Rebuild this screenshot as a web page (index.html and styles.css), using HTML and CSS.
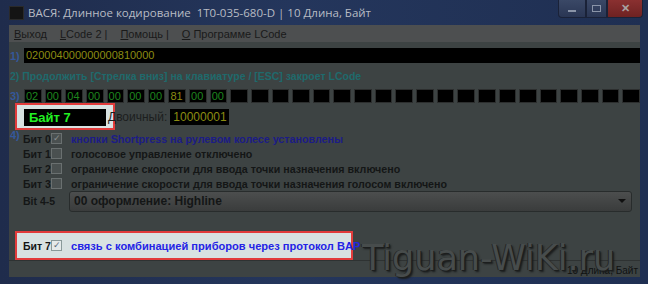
FILE: index.html
```html
<!DOCTYPE html>
<html lang="ru">
<head>
    <meta charset="UTF-8">
    <title>ВАСЯ: Длинное кодирование</title>
    <link rel="stylesheet" href="styles.css">
</head>
<body>
    <div class="window">
        <!-- Title bar -->
        <div class="titlebar">
            <div class="app-icon"></div>
            <div class="title">ВАСЯ: Длинное кодирование&nbsp; 1T0-035-680-D | 10 Длина, Байт</div>
            <div class="controls">
                <div class="ctl ctl-min"><span></span></div>
                <div class="ctl ctl-max"><span></span></div>
                <div class="ctl ctl-close">✕</div>
            </div>
        </div>

        <div class="client">
            <div class="menubar">
                <span class="menu-item"><u>В</u>ыход</span>
                <span class="menu-item"><u>L</u>Code 2 |</span>
                <span class="menu-item"><u>П</u>омощь |</span>
                <span class="menu-item"><u>О</u> Программе LCode</span>
            </div>

            <div class="content">
                <div class="row row-code">
                    <span class="num">1)</span>
                    <div class="code-field">020004000000000810000</div>
                </div>

                <div class="row row-hint">2) Продолжить [Стрелка вниз] на клавиатуре / [ESC] закроет LCode</div>

                <div class="row row-bytes">
                    <span class="num">3)</span>
                    <div class="bytes">
                        <div class="byte">02</div>
                        <div class="byte">00</div>
                        <div class="byte">04</div>
                        <div class="byte">00</div>
                        <div class="byte">00</div>
                        <div class="byte">00</div>
                        <div class="byte">00</div>
                        <div class="byte byte-sel">81</div>
                        <div class="byte">00</div>
                        <div class="byte">00</div>
                        <div class="byte"></div><div class="byte"></div><div class="byte"></div><div class="byte"></div><div class="byte"></div>
                        <div class="byte"></div><div class="byte"></div><div class="byte"></div><div class="byte"></div><div class="byte"></div>
                        <div class="byte"></div><div class="byte"></div><div class="byte"></div><div class="byte"></div><div class="byte"></div>
                        <div class="byte"></div><div class="byte"></div><div class="byte"></div><div class="byte"></div><div class="byte"></div>
                    </div>
                </div>

                <div class="row row-byte-info">
                    <div class="highlight hl-byte">
                        <div class="byte-name">Байт 7</div>
                    </div>
                    <span class="bin-label">Двоичный:</span>
                    <div class="bin-field">10000001</div>
                </div>

                <div class="bits">
                    <span class="num num-4">4)</span>
                    <div class="bit">
                        <span class="bit-label">Бит 0</span>
                        <span class="check checked">✓</span>
                        <span class="bit-text bit-on">кнопки Shortpress на рулевом колесе установлены</span>
                    </div>
                    <div class="bit">
                        <span class="bit-label">Бит 1</span>
                        <span class="check"></span>
                        <span class="bit-text">голосовое управление отключено</span>
                    </div>
                    <div class="bit">
                        <span class="bit-label">Бит 2</span>
                        <span class="check"></span>
                        <span class="bit-text">ограничение скорости для ввода точки назначения включено</span>
                    </div>
                    <div class="bit">
                        <span class="bit-label">Бит 3</span>
                        <span class="check"></span>
                        <span class="bit-text">ограничение скорости для ввода точки назначения голосом включено</span>
                    </div>
                    <div class="bit bit-combo">
                        <span class="bit-label">Bit 4-5</span>
                        <div class="combo">
                            <span>00 оформление: Highline</span>
                            <span class="combo-arrow"></span>
                        </div>
                    </div>
                </div>

                <div class="highlight hl-bit7">
                    <span class="bit-label">Бит 7</span>
                    <span class="check checked">✓</span>
                    <span class="bit7-text">связь с комбинацией приборов через протокол BAP</span>
                </div>
            </div>

            <div class="statusbar">10 Длина, Байт</div>
        </div>

        <div class="watermark">Tiguan-WiKi.ru</div>
    </div>
</body>
</html>
```

FILE: styles.css
```css
body {
    margin: 0;
    width: 648px;
    height: 284px;
    overflow: hidden;
    background-color: #1c2946;
    font-family: 'Liberation Sans', Arial, sans-serif;
}
.window {
    position: relative;
    height: 284px;
    display: flex;
    flex-direction: column;
    background: linear-gradient(90deg, #1f2c4c 0%, #24365c 45%, #1f2f52 100%);
}
.titlebar {
    height: 25px;
    flex-shrink: 0;
    display: flex;
    align-items: center;
    padding-left: 9px;
}
.app-icon {
    width: 13px;
    height: 12px;
    background-color: #141414;
    border: 1px solid #2a2a2a;
    margin-right: 4px;
}
.title {
    color: #b8bcc4;
    font-family: 'Open Sans', 'Liberation Sans', sans-serif;
    font-size: 11.5px;
    flex: 1;
    white-space: nowrap;
}
.controls {
    align-self: flex-start;
    display: flex;
    margin-right: 5px;
}
.ctl {
    height: 17px;
    border: 1px solid #1a2238;
    border-top: none;
    display: flex;
    align-items: center;
    justify-content: center;
    background: linear-gradient(#3a4866, #2a3654);
}
.ctl-min {
    width: 26px;
    border-radius: 0 0 0 4px;
}
.ctl-min span {
    width: 8px;
    height: 2px;
    background-color: #8a94a8;
    margin-top: 4px;
}
.ctl-max {
    width: 19px;
}
.ctl-max span {
    width: 7px;
    height: 5px;
    border: 1px solid #8a94a8;
}
.ctl-close {
    width: 34px;
    border-radius: 0 0 4px 0;
    background: linear-gradient(#8a3030, #6e2222);
    color: #a8a0a0;
    font-size: 11px;
    font-weight: bold;
}
.client {
    flex: 1;
    margin: 0 8px 7px 9px;
    background-color: #3d4343;
    display: flex;
    flex-direction: column;
    min-height: 0;
}
.menubar {
    height: 17px;
    flex-shrink: 0;
    background-color: #4d4f50;
    display: flex;
    align-items: center;
    font-size: 11px;
    color: #1a1a1a;
    padding-left: 5px;
    gap: 13px;
}
.menubar u {
    text-underline-offset: 1px;
}
.content {
    flex: 1;
    display: flex;
    flex-direction: column;
    padding: 6px 0 0 1px;
}
.row {
    display: flex;
    align-items: center;
}
.num {
    color: #34589a;
    font-size: 11px;
    font-weight: bold;
    width: 14px;
    flex-shrink: 0;
}
.code-field {
    flex: 1;
    height: 15px;
    background-color: #000;
    color: #8c8c12;
    font-size: 11px;
    line-height: 15px;
    padding-left: 2px;
}
.row-hint {
    margin-top: 6px;
    height: 13px;
    color: #1f6a6c;
    font-size: 10.5px;
    font-weight: bold;
}
.row-bytes {
    margin-top: 7px;
}
.bytes {
    flex: 1;
    display: grid;
    grid-template-columns: repeat(30, 1fr);
    gap: 3px;
}
.byte {
    height: 14px;
    background-color: #000;
    border: 1px solid #2c2e2e;
    box-sizing: border-box;
    color: #1e861e;
    font-size: 11px;
    line-height: 13px;
    padding-left: 1px;
}
.byte-sel {
    color: #8c8c12;
}
.row-byte-info {
    padding-left: 5px;
}
.highlight {
    background-color: #d8e2e2;
    border: 2px solid #e23c3c;
    box-sizing: border-box;
}
.hl-byte {
    width: 100px;
    height: 27px;
    padding: 4px 7px 0 7px;
}
.byte-name {
    height: 17px;
    background-color: #000;
    color: #22f022;
    font-size: 13px;
    font-weight: bold;
    line-height: 17px;
    padding-left: 5px;
}
.bin-label {
    position: relative;
    margin-left: -7px;
    color: #1c1e1e;
    font-size: 12px;
}
.bin-field {
    margin-left: 3px;
    width: 59px;
    height: 16px;
    background-color: #000;
    color: #8c8c12;
    font-size: 12px;
    line-height: 16px;
    padding-left: 3px;
    box-sizing: border-box;
}
.bits {
    position: relative;
    display: flex;
    flex-direction: column;
    padding-left: 13px;
    margin-top: 1px;
}
.num-4 {
    position: absolute;
    left: 0;
    top: -2px;
}
.bit {
    display: flex;
    align-items: center;
    height: 15px;
}
.bit-label {
    width: 28px;
    flex-shrink: 0;
    color: #141616;
    font-size: 10.5px;
    font-weight: bold;
    white-space: nowrap;
}
.check {
    width: 11px;
    height: 11px;
    flex-shrink: 0;
    box-sizing: border-box;
    border: 1px solid #6a7070;
    background-color: #4a5050;
    margin-right: 9px;
    color: #8a9090;
    font-size: 9px;
    line-height: 9px;
    text-align: center;
}
.bit-text {
    color: #141616;
    font-size: 10.7px;
    font-weight: bold;
    white-space: nowrap;
}
.bit-on {
    color: #1c1c86;
}
.bit-combo {
    height: 22px;
    margin-top: -1px;
}
.bit-combo .bit-label {
    width: 46px;
}
.combo {
    width: 563px;
    height: 21px;
    box-sizing: border-box;
    border: 1px solid #282c2c;
    border-radius: 3px;
    background: linear-gradient(#4c4e4e, #3a3c3c);
    display: flex;
    align-items: center;
    justify-content: space-between;
    padding: 0 5px 0 4px;
    color: #141616;
    font-size: 12px;
    font-weight: bold;
}
.combo-arrow {
    width: 0;
    height: 0;
    border-left: 4px solid transparent;
    border-right: 4px solid transparent;
    border-top: 4px solid #101010;
}
.hl-bit7 {
    margin: 19px 0 0 5px;
    width: 338px;
    height: 29px;
    display: flex;
    align-items: center;
    padding-left: 6px;
}
.hl-bit7 .check {
    background-color: #e4eaea;
    border-color: #8a9a9a;
    color: #5a6a7a;
}
.bit7-text {
    color: #2424e6;
    font-size: 11.1px;
    font-weight: bold;
    white-space: nowrap;
}
.statusbar {
    height: 18px;
    flex-shrink: 0;
    border-top: 1px solid #2e3232;
    display: flex;
    align-items: center;
    justify-content: flex-end;
    padding-right: 2px;
    color: #101212;
    font-size: 10px;
}
.watermark {
    position: absolute;
    left: 362px;
    top: 241px;
    font-family: 'DejaVu Sans', sans-serif;
    font-size: 35px;
    line-height: 35px;
    white-space: nowrap;
    color: #474c4c;
    text-shadow: 1px 1px 0 #1c1e1e, -1px 0 0 #262828, 2px 2px 2px #1a1c1c;
}
```
